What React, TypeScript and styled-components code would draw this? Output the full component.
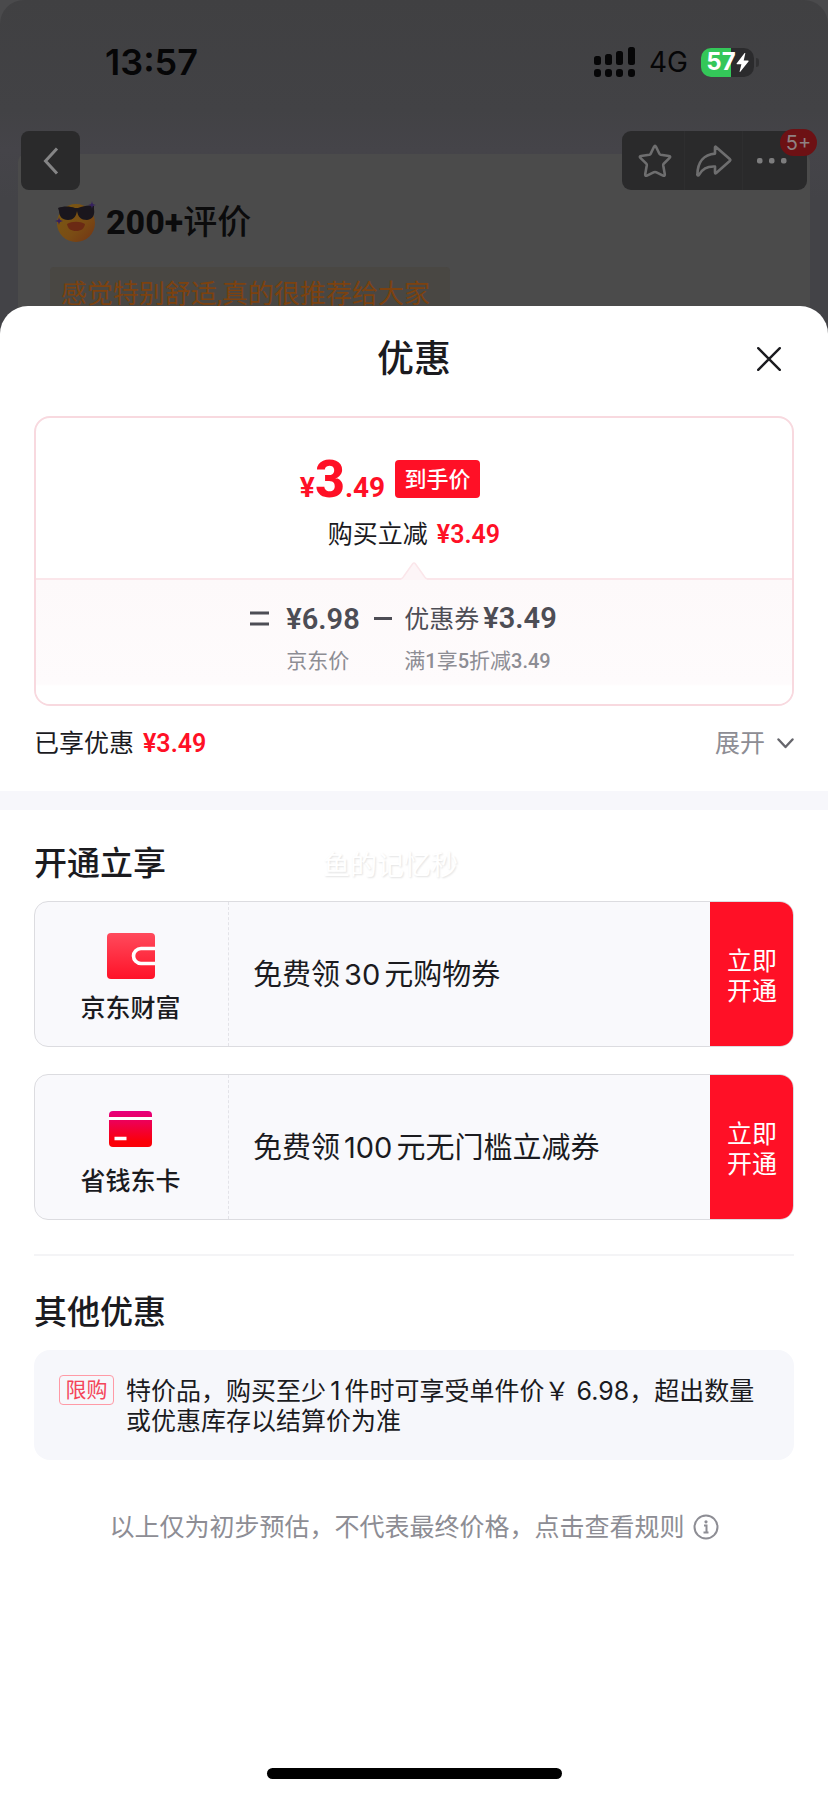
import React from "react";
import styled, { createGlobalStyle } from "styled-components";

const UI_FONT = `Inter, "Noto Sans CJK SC", sans-serif`;
const PRICE_FONT = `Roboto, "Noto Sans CJK SC", sans-serif`;
const RED = "#ff1026";
const INK = "#1b1b1f";
const SLATE = "#4d4d55";
const GREY = "#8d8d94";

const GlobalStyle = createGlobalStyle`
  *, *::before, *::after { box-sizing: border-box; }
  body { margin: 0; background: #4a4a4c; font-family: ${UI_FONT}; color: ${INK}; }
  button { border: 0; padding: 0; background: none; font: inherit; color: inherit; cursor: pointer; }
  h1, h2, p { margin: 0; }
  svg { display: block; }
`;

const Page = styled.div`
  display: flex;
  flex-direction: column;
  min-height: 100vh;
`;

/* dimmed product page behind the sheet */

const Backdrop = styled.header`
  border-radius: 24px 24px 0 0;
  background: linear-gradient(#404042 0, #424245 110px, #454449 150px, #434347 200px);
`;

const StatusBar = styled.div`
  display: flex;
  align-items: center;
  justify-content: space-between;
  height: 124px;
  padding: 0 69px 0 105px;
  color: #060607;
`;

const Time = styled.span`
  font-size: 36px;
  line-height: 40px;
  font-weight: 600;
`;

const StatusIcons = styled.div`
  display: flex;
  align-items: center;
`;

const Network = styled.span`
  margin: 0 13px 0 14px;
  font-size: 28px;
  line-height: 32px;
`;

const Battery = styled.div`
  display: flex;
  align-items: center;
  gap: 2px;
  &::after {
    content: "";
    width: 3px;
    height: 9px;
    border-radius: 0 3px 3px 0;
    background: #313133;
  }
`;

const BatteryBody = styled.div`
  display: flex;
  align-items: center;
  justify-content: center;
  width: 53px;
  height: 29px;
  border-radius: 10px;
  background: linear-gradient(90deg, #34c759 57%, #2b2b2d 57%);
  color: #fff;
  font-size: 24px;
  line-height: 28px;
  font-weight: 700;
`;

const Toolbar = styled.div`
  position: relative;
  z-index: 1;
  display: flex;
  justify-content: space-between;
  margin-top: 7px;
  padding: 0 21px;
`;

const BackButton = styled.button`
  display: grid;
  place-items: center;
  width: 59px;
  height: 59px;
  border-radius: 8px;
  background: #2a2a2b;
`;

const Actions = styled.div`
  position: relative;
  display: grid;
  grid-template-columns: repeat(3, 58px);
  width: 185px;
  height: 59px;
  padding: 0 4px;
  border-radius: 9px;
  background: #2a2a2b;
`;

const ActionButton = styled.button`
  display: grid;
  place-items: center;
  & + & { border-left: 1px solid #2e2e2f; }
`;

const Badge = styled.span`
  position: absolute;
  top: -2px;
  right: -10px;
  width: 37px;
  height: 27px;
  border-radius: 14px;
  background: #6d1114;
  color: #8f8182;
  font-size: 20px;
  line-height: 29px;
  text-align: center;
`;

const ReviewCard = styled.section`
  display: flex;
  flex-direction: column;
  align-items: flex-start;
  margin: -36px 18px 0;
  padding: 43px 32px 39px;
  border-radius: 8px 8px 0 0;
  background: #4b4b4b;
`;

const ReviewTitle = styled.h2`
  display: flex;
  align-items: center;
  height: 50px;
  padding-left: 5px;
  color: #0b0b0c;
  font-family: ${PRICE_FONT};
  font-size: 34px;
  line-height: 48px;
  font-weight: 500;
  svg { margin-right: 9px; }
  b { font-weight: 800; }
`;

const ReviewChip = styled.p`
  margin-top: 20px;
  padding: 8px 20px 8px 11px;
  border-radius: 4px;
  background: #494743;
  color: #7d420f;
  font-family: ${PRICE_FONT};
  font-size: 26px;
  line-height: 38px;
`;

/* sheet */

const Sheet = styled.main`
  position: relative;
  z-index: 2;
  flex: 1;
  display: flex;
  flex-direction: column;
  margin-top: -54px;
  border-radius: 28px 28px 0 0;
  background: #fff;
`;

const SheetHeader = styled.div`
  display: grid;
  grid-template-columns: 1fr auto 1fr;
  align-items: center;
  height: 106px;
  padding: 0 47px;
`;

const SheetTitle = styled.h1`
  grid-column: 2;
  font-size: 37px;
  line-height: 54px;
  font-weight: 500;
`;

const CloseButton = styled.button`
  justify-self: end;
`;

const Section = styled.section`
  padding: 0 34px;
`;

const PriceCard = styled.div`
  margin-top: 4px;
  border: 2px solid #f8d9df;
  border-radius: 16px;
  overflow: hidden;
`;

const PriceTop = styled.div`
  display: flex;
  flex-direction: column;
  align-items: center;
  padding-top: 34px;
`;

const FinalPrice = styled.div`
  display: flex;
  align-items: center;
  gap: 10px;
  height: 54px;
  margin-bottom: 10px;
  padding-right: 48px;
`;

const Amount = styled.span<{ $size: number; $tone?: string }>`
  font-family: ${PRICE_FONT};
  font-size: ${(p) => p.$size}px;
  font-weight: 600;
  color: ${(p) => p.$tone ?? RED};
`;

const BigAmount = styled(Amount)`
  padding-top: 10px;
  line-height: 54px;
  font-weight: 700;
  b { font-size: 52px; font-weight: 800; }
`;

const PriceTag = styled.span`
  width: 85px;
  border-radius: 4px;
  background: ${RED};
  color: #fff;
  font-size: 22px;
  line-height: 38px;
  font-weight: 500;
  text-align: center;
`;

const Saving = styled.p`
  display: flex;
  align-items: baseline;
  gap: 9px;
  font-size: 25px;
  line-height: 36px;
`;

const Notch = styled.svg`
  position: relative;
  margin: 7px 0 -2px;
`;

const Formula = styled.div`
  display: grid;
  grid-template-columns: 36px 88px 30px auto;
  justify-content: center;
  align-items: center;
  padding: 18px 21px 21px 0;
  border-top: 2px solid #fbe6ea;
  background: linear-gradient(#fdf9fa, #fefbfc 104px, #fff 106px);
`;

const Term = styled.span`
  display: flex;
  align-items: baseline;
  gap: 4px;
  color: ${SLATE};
  font-size: 25px;
  line-height: 40px;
`;

const TermNote = styled.span<{ $column: number }>`
  grid-column: ${(p) => p.$column};
  color: ${GREY};
  font-family: ${PRICE_FONT};
  font-size: 21px;
  line-height: 44px;
  b { font-size: 20px; font-weight: 500; }
`;

const Summary = styled.div`
  display: flex;
  align-items: center;
  justify-content: space-between;
  height: 85px;
  padding-bottom: 11px;
`;

const ExpandButton = styled.button`
  display: flex;
  align-items: center;
  gap: 12px;
  color: ${GREY};
  font-size: 25px;
  line-height: 36px;
`;

const Band = styled.hr`
  width: 100%;
  height: 19px;
  margin: 0;
  border: 0;
  background: #f7f7fb;
`;

const SectionHead = styled.div`
  display: flex;
  align-items: center;
  gap: 157px;
  height: 61px;
  margin-top: 30px;
  padding-bottom: 15px;
`;

const SectionTitle = styled.h2`
  font-size: 33px;
  line-height: 48px;
  font-weight: 500;
`;

const Watermark = styled.span`
  padding-top: 5px;
  color: #fff;
  font-size: 27px;
  line-height: 36px;
  text-shadow: 1px 1px 2px #e2e2e2;
`;

const CouponList = styled.div`
  display: flex;
  flex-direction: column;
  gap: 27px;
  margin-bottom: 33px;
  padding-bottom: 34px;
  border-bottom: 2px solid #f4f4f6;
`;

const CouponCard = styled.article`
  display: flex;
  height: 146px;
  border: 1px solid #dcdce0;
  border-radius: 14px;
  background: #f9f9fc;
  overflow: hidden;
`;

const CouponBrand = styled.div`
  display: flex;
  flex-direction: column;
  align-items: center;
  gap: 7px;
  width: 194px;
  padding: 27px 2px 0 0;
  border-right: 1px dashed #e3e3e8;
  font-size: 25px;
  line-height: 36px;
  font-weight: 500;
`;

const CouponIcon = styled.span`
  display: grid;
  place-items: center;
  height: 54px;
`;

const CouponText = styled.p`
  flex: 1;
  align-self: center;
  padding: 2px 0 0 24px;
  font-size: 29px;
  line-height: 40px;
  span { margin: 0 4px; }
`;

const CouponButton = styled.button`
  width: 84px;
  margin: -1px;
  padding: 4px 16px 0;
  background: ${RED};
  color: #fff;
  font-size: 25px;
  line-height: 30px;
`;

const LimitBox = styled.div`
  display: flex;
  align-items: flex-start;
  gap: 12px;
  padding: 25px 28px 24px 25px;
  border-radius: 16px;
  background: #f6f7fb;
`;

const LimitTag = styled.span`
  flex: none;
  width: 55px;
  border: 1px solid #ff9aa6;
  border-radius: 4px;
  color: #f4455a;
  font-size: 21px;
  line-height: 28px;
  text-align: center;
`;

const LimitText = styled.p`
  padding-top: 1px;
  font-size: 25px;
  line-height: 30px;
`;

const RuleButton = styled.button`
  display: flex;
  align-items: center;
  align-self: center;
  gap: 8px;
  margin-top: 49px;
  color: ${GREY};
  font-size: 25px;
  line-height: 36px;
`;

const HomeIndicator = styled.div`
  align-self: center;
  width: 295px;
  height: 11px;
  margin: auto 0 17px;
  border-radius: 6px;
  background: #000;
`;

const SignalIcon = () => (
  <svg width="41" height="30" viewBox="0 0 41 30" fill="#060607" aria-hidden>
    {[0, 11, 22, 34].map((x, i) => (
      <React.Fragment key={x}>
        <rect x={x} y={[9, 7, 4, 0][i]} width="7" height={[9, 11, 14, 18][i]} rx="2.5" />
        <rect x={x} y="22" width="7" height="8" rx="3" />
      </React.Fragment>
    ))}
  </svg>
);

const BoltIcon = () => (
  <svg width="13" height="19" viewBox="0 0 13 19" fill="#fff" aria-hidden>
    <path d="M8.6 0 .6 10.4c-.3.5-.1.9.4.9h4.4L3.6 18.4c-.1.5.3.7.7.3L12.5 8.5c.3-.5.1-.9-.4-.9H7.7L9.3.5c.1-.5-.4-.8-.7-.5z" />
  </svg>
);

const CoolFace = () => (
  <svg width="42" height="42" viewBox="0 0 42 42" aria-hidden>
    <defs>
      <linearGradient id="face" x1="0" y1="0" x2="1" y2="1">
        <stop offset="0" stopColor="#7a5a12" />
        <stop offset=".6" stopColor="#7a4c14" />
        <stop offset="1" stopColor="#733314" />
      </linearGradient>
    </defs>
    <circle cx="21" cy="22" r="19" fill="url(#face)" />
    <path d="M12 23c5-3 13-3 18 0-1 5-4 7-9 7s-8-2-9-7z" fill="#6b2a14" />
    <path d="M3 7c5-2 12-2 17 0h3c5-2 11-3 16-2v3c1 6-1 10-7 11-6 0-9-3-10-9-1 6-4 9-9 9-6 0-9-4-9-9z" fill="#1a161d" />
    <path d="M37 0c.5 3 1 3.5 4 4-3 .5-3.5 1-4 4-.5-3-1-3.5-4-4 3-.5 3.5-1 4-4zM4 16c.5 3 1.5 3.5 4 4-2.5.5-3.5 1-4 4-.5-3-1-3.5-4-4 3-.5 3.5-1 4-4z" fill="#35205e" />
  </svg>
);

const StarIcon = () => (
  <svg width="34" height="34" viewBox="0 0 34 34" fill="none" stroke="#6e6e6f" strokeWidth="2.6" strokeLinejoin="round" aria-hidden>
    <path d="M16 2.8Q17 1 18 2.8L21.4 9.8Q21.8 10.6 22.7 10.8L31 12Q33 12.4 31.6 13.9L25.7 19.7Q25.1 20.3 25.2 21.2L26.8 30.2Q27 32.4 25 31.6L18 28.2Q17 27.8 16 28.2L9 31.6Q7 32.4 7.2 30.2L8.8 21.2Q8.9 20.3 8.3 19.7L2.4 13.9Q1 12.4 3 12L11.3 10.8Q12.2 10.6 12.6 9.8Z" />
  </svg>
);

const ShareIcon = () => (
  <svg width="36" height="32" viewBox="0 0 36 32" fill="none" stroke="#6e6e6f" strokeWidth="2.6" strokeLinejoin="round" aria-hidden>
    <path d="M19 2.2Q19.2 1.2 20 1.9L34 14.3Q34.7 15 34 15.7L20.2 28Q19 29 19 27.6V21.6C10.5 21.2 6.5 24 3 29.8 2.4 30.8 1.3 30.5 1.4 29.4 1.6 17 8 9.5 19 8.6Z" />
  </svg>
);

const MoreIcon = () => (
  <svg width="30" height="6" viewBox="0 0 30 6" fill="#7d7d7e" aria-hidden>
    <rect width="5.5" height="5.5" rx="2" />
    <rect x="12" width="5.5" height="5.5" rx="2" />
    <rect x="24" width="5.5" height="5.5" rx="2" />
  </svg>
);

const WalletIcon = () => (
  <svg width="48" height="46" viewBox="0 0 48 46" aria-hidden>
    <defs>
      <linearGradient id="wallet" x1="0" y1="0" x2="0" y2="1">
        <stop offset="0" stopColor="#ff4a5c" />
        <stop offset="1" stopColor="#ff1228" />
      </linearGradient>
    </defs>
    <rect width="48" height="46" rx="4" fill="url(#wallet)" />
    <path d="M48 15.5H34a7.5 7.5 0 0 0 0 15H48" fill="none" stroke="#fff" strokeWidth="3.6" />
  </svg>
);

const CardIcon = () => (
  <svg width="43" height="36" viewBox="0 0 43 36" aria-hidden>
    <defs>
      <linearGradient id="card" x1="0" y1="0" x2="0" y2="1">
        <stop offset="0" stopColor="#e6007e" />
        <stop offset=".85" stopColor="#fb0008" />
      </linearGradient>
    </defs>
    <rect width="43" height="36" rx="4" fill="url(#card)" />
    <path d="M0 7.5h43" stroke="#fff" strokeWidth="3" />
    <path d="M5.5 27.5h12" stroke="#fff" strokeWidth="3.6" />
  </svg>
);

const coupons = [
  { name: "京东财富", value: "30", item: "元购物券", Icon: WalletIcon },
  { name: "省钱东卡", value: "100", item: "元无门槛立减券", Icon: CardIcon },
];

const limitNote =
  "特价品，购买至少\u20061\u2006件时可享受单件价￥ 6.98，超出数量或优惠库存以结算价为准";

export default function App() {
  return (
    <Page>
      <GlobalStyle />
      <Backdrop>
        <StatusBar>
          <Time>13:57</Time>
          <StatusIcons>
            <SignalIcon />
            <Network>4G</Network>
            <Battery>
              <BatteryBody>
                57
                <BoltIcon />
              </BatteryBody>
            </Battery>
          </StatusIcons>
        </StatusBar>
        <Toolbar>
          <BackButton aria-label="返回">
            <svg width="16" height="28" viewBox="0 0 16 28" fill="none" stroke="#858586" strokeWidth="3" aria-hidden>
              <path d="M14 1.5 2.5 14 14 26.5" />
            </svg>
          </BackButton>
          <Actions>
            <ActionButton aria-label="收藏"><StarIcon /></ActionButton>
            <ActionButton aria-label="分享"><ShareIcon /></ActionButton>
            <ActionButton aria-label="更多"><MoreIcon /></ActionButton>
            <Badge>5+</Badge>
          </Actions>
        </Toolbar>
        <ReviewCard>
          <ReviewTitle>
            <CoolFace />
            <b>200+</b>评价
          </ReviewTitle>
          <ReviewChip>感觉特别舒适,真的很推荐给大家</ReviewChip>
        </ReviewCard>
      </Backdrop>

      <Sheet>
        <SheetHeader>
          <SheetTitle>优惠</SheetTitle>
          <CloseButton aria-label="关闭">
            <svg width="24" height="24" viewBox="0 0 24 24" stroke={INK} strokeWidth="2.4" strokeLinecap="round" aria-hidden>
              <path d="M1.2 1.2l21.6 21.6M22.8 1.2 1.2 22.8" />
            </svg>
          </CloseButton>
        </SheetHeader>

        <Section>
          <PriceCard>
            <PriceTop>
              <FinalPrice>
                <BigAmount $size={28}>¥<b>3</b>.49</BigAmount>
                <PriceTag>到手价</PriceTag>
              </FinalPrice>
              <Saving>
                购买立减<Amount $size={25}>¥3.49</Amount>
              </Saving>
              <Notch width="30" height="20" viewBox="0 0 30 20" aria-hidden>
                <path d="M2 19Q4 18 5 16L13.5 4Q15 2 16.5 4L25 16Q26 18 28 19V20H2Z" fill="#fdf5f7" />
                <path d="M2 19Q4 18 5 16L13.5 4Q15 2 16.5 4L25 16Q26 18 28 19" fill="none" stroke="#fbe6ea" strokeWidth="1.5" />
              </Notch>
            </PriceTop>
            <Formula>
              <svg width="20" height="15" viewBox="0 0 20 15" stroke={SLATE} strokeWidth="3" role="img" aria-label="等于">
                <path d="M0 2h19M0 13h19" />
              </svg>
              <Amount $size={29} $tone={SLATE}>¥6.98</Amount>
              <svg width="18" height="3" viewBox="0 0 18 3" stroke={SLATE} strokeWidth="3" role="img" aria-label="减">
                <path d="M0 1.5h18" />
              </svg>
              <Term>
                优惠券<Amount $size={29} $tone={SLATE}>¥3.49</Amount>
              </Term>
              <TermNote $column={2}>京东价</TermNote>
              <TermNote $column={4}>满<b>1</b>享<b>5</b>折减<b>3.49</b></TermNote>
            </Formula>
          </PriceCard>
          <Summary>
            <Saving>
              已享优惠<Amount $size={25}>¥3.49</Amount>
            </Saving>
            <ExpandButton>
              展开
              <svg width="17" height="11" viewBox="0 0 17 11" fill="none" stroke="#66666c" strokeWidth="2.4" strokeLinecap="round" strokeLinejoin="round" aria-hidden>
                <path d="M1.5 1.5l7 7.5 7-7.5" />
              </svg>
            </ExpandButton>
          </Summary>
        </Section>

        <Band />

        <Section>
          <SectionHead>
            <SectionTitle>开通立享</SectionTitle>
            <Watermark>鱼的记忆秒</Watermark>
          </SectionHead>
          <CouponList>
            {coupons.map(({ name, value, item, Icon }) => (
              <CouponCard key={name}>
                <CouponBrand>
                  <CouponIcon><Icon /></CouponIcon>
                  {name}
                </CouponBrand>
                <CouponText>免费领<span>{value}</span>{item}</CouponText>
                <CouponButton>立即开通</CouponButton>
              </CouponCard>
            ))}
          </CouponList>
          <SectionHead>
            <SectionTitle>其他优惠</SectionTitle>
          </SectionHead>
          <LimitBox>
            <LimitTag>限购</LimitTag>
            <LimitText>{limitNote}</LimitText>
          </LimitBox>
        </Section>

        <RuleButton>
          以上仅为初步预估，不代表最终价格，点击查看规则
          <svg width="26" height="26" viewBox="0 0 26 26" fill="none" stroke={GREY} strokeWidth="2" aria-hidden>
            <circle cx="13" cy="13" r="11.5" />
            <path d="M11 11.5h2.5v6.5M10.5 18.5h5" />
            <circle cx="13" cy="7.8" r="1.6" fill={GREY} stroke="none" />
          </svg>
        </RuleButton>
        <HomeIndicator />
      </Sheet>
    </Page>
  );
}
